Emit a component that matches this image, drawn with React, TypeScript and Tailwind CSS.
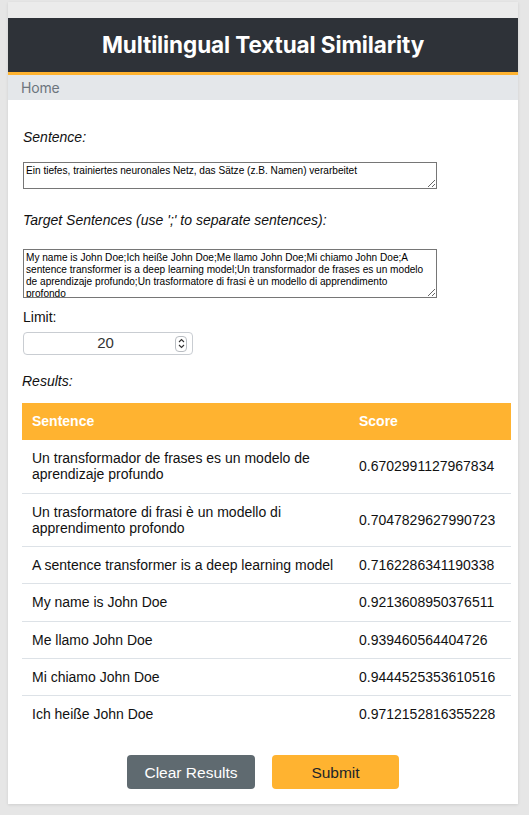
import React from "react";

const rows: [string, string][] = [
  ["Un transformador de frases es un modelo de aprendizaje profundo", "0.6702991127967834"],
  ["Un trasformatore di frasi è un modello di apprendimento profondo", "0.7047829627990723"],
  ["A sentence transformer is a deep learning model", "0.7162286341190338"],
  ["My name is John Doe", "0.9213608950376511"],
  ["Me llamo John Doe", "0.939460564404726"],
  ["Mi chiamo John Doe", "0.9444525353610516"],
  ["Ich heiße John Doe", "0.9712152816355228"],
];

export default function App() {
  return (
    <div className="min-h-[815px] bg-[#e6e6e6] pt-[2px] px-2 font-['Liberation_Sans',Arial,sans-serif] text-[#111]">
      <div className="w-[510px] bg-white shadow-[0_1px_3px_rgba(0,0,0,0.10)]">
        <div className="h-4 bg-[#ebebeb]" />
        <header className="h-[57px] bg-[#2e3238] border-b-[3px] border-[#ffb330] flex items-center justify-center">
          <h1 className="text-white text-[22.5px] font-bold font-['Inter',sans-serif] tracking-[-0.1px] leading-none">
            Multilingual Textual Similarity
          </h1>
        </header>
        <nav className="h-[25px] bg-[#e4e7ea] pl-[13px] flex items-center">
          <span className="text-[14px] text-[#6c757d] font-['Inter',sans-serif] tracking-[-0.2px]">Home</span>
        </nav>

        <div className="pl-[15px] pb-[15px]">
          <div className="pt-[29px] text-[14px] leading-4 italic">Sentence:</div>
          <textarea
            readOnly
            spellCheck={false}
            className="mt-[17px] block w-[414px] h-[27px] border border-[#767676] pl-[2px] pr-[10px] py-[2px] text-[10.1px] leading-[12px] overflow-hidden outline-none text-black"
            defaultValue="Ein tiefes, trainiertes neuronales Netz, das Sätze (z.B. Namen) verarbeitet"
          />
          <div className="mt-[23px] text-[14px] leading-4 italic">
            Target Sentences (use ';' to separate sentences):
          </div>
          <textarea
            readOnly
            spellCheck={false}
            className="mt-[21px] block w-[414px] h-[49px] border border-[#767676] pl-[2px] pr-[10px] py-[2px] text-[10.1px] leading-[12px] overflow-hidden outline-none text-black"
            defaultValue="My name is John Doe;Ich heiße John Doe;Me llamo John Doe;Mi chiamo John Doe;A sentence transformer is a deep learning model;Un transformador de frases es un modelo de aprendizaje profundo;Un trasformatore di frasi è un modello di apprendimento profondo"
          />
          <div className="mt-[10px] text-[14px] leading-[18px]">Limit:</div>
          <div className="mt-[6px] w-[170px] h-[23px] border border-[#c9cdd2] rounded-[4px] flex items-center">
            <span className="flex-1 text-center text-[15px] text-[#333] pl-[12px]">20</span>
            <div className="mr-[5px] w-[12px] h-[16px] border border-[#b9bdc2] rounded-[4px] flex flex-col items-center justify-center gap-[1px]">
              <svg width="7" height="5" viewBox="0 0 7 5">
                <path d="M1 4 L3.5 1.5 L6 4" fill="none" stroke="#333" strokeWidth="1.1" />
              </svg>
              <svg width="7" height="5" viewBox="0 0 7 5">
                <path d="M1 1 L3.5 3.5 L6 1" fill="none" stroke="#333" strokeWidth="1.1" />
              </svg>
            </div>
          </div>
          <div className="mt-[18px] -ml-[1px] text-[14px] leading-4 italic">Results:</div>

          <table className="mt-[14px] -ml-[1px] w-[489px] table-fixed border-collapse text-[14px]">
            <colgroup>
              <col className="w-[327px]" />
              <col className="w-[162px]" />
            </colgroup>
            <thead>
              <tr className="bg-[#ffb330] text-white">
                <th className="text-left font-bold px-[10px] py-[10px] leading-[17px]">Sentence</th>
                <th className="text-left font-bold px-[10px] py-[10px] leading-[17px]">Score</th>
              </tr>
            </thead>
            <tbody>
              {rows.map(([s, v], i) => (
                <tr key={i} className={i < rows.length - 1 ? "border-b border-[#dde2e7]" : ""}>
                  <td className="px-[10px] py-[10px] leading-[16.3px] align-middle">{s}</td>
                  <td className="px-[10px] py-[10px] leading-[16.3px] align-middle">{v}</td>
                </tr>
              ))}
            </tbody>
          </table>

          <div className="mt-[22px] -ml-[15px] flex justify-center gap-[17px]">
            <button className="w-[128px] h-[34px] rounded-[4px] bg-[#5f6a70] text-white text-[15.5px] pt-[1px]">
              Clear Results
            </button>
            <button className="w-[127px] h-[34px] rounded-[4px] bg-[#ffb330] text-[#212529] text-[15.5px] pt-[1px]">
              Submit
            </button>
          </div>
        </div>
      </div>
    </div>
  );
}
